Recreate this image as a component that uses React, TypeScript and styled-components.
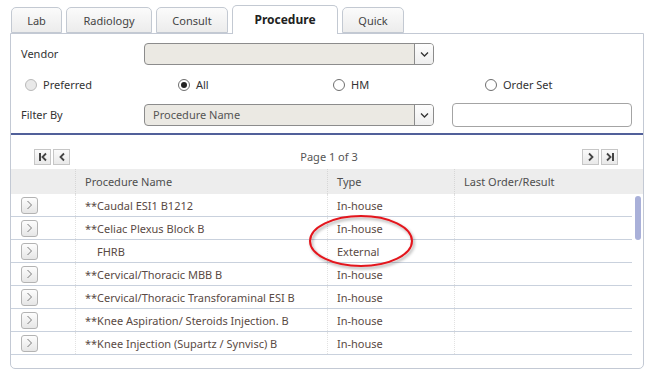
import React from "react";
import styled, { createGlobalStyle } from "styled-components";

const GlobalStyle = createGlobalStyle`
  html, body { margin: 0; padding: 0; background: #ffffff; }
  body { font-family: "Noto Sans", "Liberation Sans", sans-serif; font-size: 11px; color: #333; }
  * { box-sizing: border-box; }
`;

const Page = styled.div`
  position: relative;
  width: 650px;
  height: 377px;
  padding: 5px 6px 0 10px;
`;

const TabBar = styled.div`
  display: flex;
  align-items: flex-end;
  gap: 4px;
  padding-left: 1px;
  height: 28px;
  position: relative;
  z-index: 2;
`;

const Tab = styled.div<{ $active?: boolean; $w: number }>`
  width: ${(p) => p.$w}px;
  height: ${(p) => (p.$active ? "29px" : "26px")};
  margin-bottom: ${(p) => (p.$active ? "-1px" : "0")};
  display: flex;
  align-items: center;
  justify-content: center;
  border: 1px solid #c3c9d2;
  border-bottom: ${(p) => (p.$active ? "none" : "1px solid #c3c9d2")};
  border-radius: 5px 5px 0 0;
  background: ${(p) =>
    p.$active ? "#ffffff" : "linear-gradient(#fbfbfb, #ececec)"};
  color: ${(p) => (p.$active ? "#222" : "#444")};
  font-size: ${(p) => (p.$active ? "12px" : "11px")};
  font-weight: ${(p) => (p.$active ? 700 : 400)};
  padding-bottom: ${(p) => (p.$active ? "2px" : "0")};
`;

const Panel = styled.div`
  width: 634px;
  border: 1px solid #c3c9d4;
  border-radius: 0 0 5px 5px;
  background: #fff;
`;

const Form = styled.div`
  padding: 9px 11px 0 10px;
  display: flex;
  flex-direction: column;
`;

const FieldRow = styled.div<{ $mt?: number }>`
  display: grid;
  grid-template-columns: 123px 290px 1fr;
  align-items: center;
  height: 22px;
  margin-top: ${(p) => p.$mt ?? 0}px;
`;

const Label = styled.div`
  color: #333;
  font-size: 11px;
  line-height: 14px;
`;

const Select = styled.div`
  height: 22px;
  border: 1px solid #8c8c8c;
  border-radius: 4px;
  background: #ebe9e3;
  display: flex;
  align-items: center;
  overflow: hidden;
`;

const SelectText = styled.div`
  flex: 1;
  padding-left: 8px;
  color: #555;
  font-size: 11px;
  line-height: 14px;
`;

const SelectButton = styled.div`
  width: 19px;
  height: 100%;
  border-left: 1px solid #8c8c8c;
  background: linear-gradient(#fdfdfd, #eeeeee);
  display: flex;
  align-items: center;
  justify-content: center;
`;

const TextInput = styled.div`
  width: 180px;
  margin-left: 18px;
  height: 24px;
  border: 1px solid #a4a4a4;
  border-radius: 4px;
  background: #fff;
`;

const RadioRow = styled.div`
  display: grid;
  grid-template-columns: 153px 155px 152px 1fr;
  padding-left: 4px;
  height: 20px;
  margin-top: 10px;
  align-items: center;
`;

const RadioItem = styled.div`
  display: flex;
  align-items: center;
  gap: 6px;
`;

const RadioCircle = styled.span<{ $checked?: boolean; $disabled?: boolean }>`
  width: 12px;
  height: 12px;
  border-radius: 50%;
  border: 1px solid ${(p) => (p.$disabled ? "#b9b9b9" : "#6f6f6f")};
  background: ${(p) => (p.$disabled ? "#e9e9e9" : "#fff")};
  display: flex;
  align-items: center;
  justify-content: center;
  &::after {
    content: "";
    display: ${(p) => (p.$checked ? "block" : "none")};
    width: 6px;
    height: 6px;
    border-radius: 50%;
    background: #222;
  }
`;

const RadioLabel = styled.span`
  color: #333;
  font-size: 11px;
  line-height: 14px;
`;

const Divider = styled.div`
  height: 2px;
  background: #51609a;
  margin-top: 8px;
`;

const Pager = styled.div`
  display: flex;
  align-items: center;
  justify-content: space-between;
  padding: 13px 25px 0 23px;
  height: 30px;
`;

const PagerGroup = styled.div`
  display: flex;
  gap: 2px;
`;

const PagerButton = styled.div`
  width: 17px;
  height: 16px;
  border: 1px solid #c6c6c6;
  background: linear-gradient(#fafafa, #e9e9e9);
  display: flex;
  align-items: center;
  justify-content: center;
`;

const PageText = styled.div`
  color: #555;
  font-size: 11px;
  line-height: 14px;
  margin-left: 6px;
`;

const Grid = styled.div`
  margin-top: 4px;
`;

const HeaderRow = styled.div`
  display: grid;
  grid-template-columns: 64px 252px 127px 1fr;
  height: 25px;
  background: #ededed;
`;

const HeaderCell = styled.div<{ $divider?: boolean }>`
  display: flex;
  align-items: center;
  padding-left: 9px;
  color: #4f4f4f;
  font-size: 11px;
  border-left: ${(p) => (p.$divider ? "1px dotted #d6d6d6" : "none")};
`;

const Body = styled.div`
  display: flex;
  padding-bottom: 13px;
`;

const Rows = styled.div`
  width: 621px;
`;

const DataRow = styled.div`
  display: grid;
  grid-template-columns: 64px 252px 127px 1fr;
  height: 23px;
  border-bottom: 1px solid #c9d1dd;
`;

const Cell = styled.div<{ $divider?: boolean; $indent?: number }>`
  display: flex;
  align-items: center;
  padding-left: ${(p) => p.$indent ?? 9}px;
  color: #5a4a44;
  font-size: 11px;
  white-space: nowrap;
  border-left: ${(p) => (p.$divider ? "1px dotted #e2e2e2" : "none")};
`;

const ButtonCell = styled.div`
  display: flex;
  align-items: center;
  padding-left: 10px;
`;

const RowButton = styled.div`
  width: 17px;
  height: 17px;
  border: 1px solid #b3b3b3;
  border-radius: 3px;
  background: linear-gradient(#fdfdfd, #e6e6e6);
  display: flex;
  align-items: center;
  justify-content: center;
`;

const ScrollTrack = styled.div`
  width: 11px;
  display: flex;
  justify-content: center;
  padding-top: 2px;
`;

const ScrollThumb = styled.div`
  width: 6px;
  height: 44px;
  border-radius: 3px;
  background: #a9b0d9;
`;

const Annotation = styled.svg`
  position: absolute;
  left: 305px;
  top: 212px;
  pointer-events: none;
`;

const Chevron = () => (
  <svg width="9" height="7" viewBox="0 0 9 7">
    <path d="M1 1.5 L4.5 5 L8 1.5" fill="none" stroke="#333" strokeWidth="1.3" />
  </svg>
);

const RowArrow = () => (
  <svg width="7" height="10" viewBox="0 0 7 10">
    <path d="M1.5 1 L5.5 5 L1.5 9" fill="none" stroke="#7a7a7a" strokeWidth="1" />
  </svg>
);

const FirstIcon = () => (
  <svg width="10" height="10" viewBox="0 0 10 10">
    <path d="M2 1 V9" stroke="#444" strokeWidth="2" />
    <path d="M8 1.5 L4.5 5 L8 8.5" fill="none" stroke="#444" strokeWidth="1.8" />
  </svg>
);
const PrevIcon = () => (
  <svg width="10" height="10" viewBox="0 0 10 10">
    <path d="M7 1.5 L3.5 5 L7 8.5" fill="none" stroke="#444" strokeWidth="1.8" />
  </svg>
);
const NextIcon = () => (
  <svg width="10" height="10" viewBox="0 0 10 10">
    <path d="M3 1.5 L6.5 5 L3 8.5" fill="none" stroke="#444" strokeWidth="1.8" />
  </svg>
);
const LastIcon = () => (
  <svg width="10" height="10" viewBox="0 0 10 10">
    <path d="M2 1.5 L5.5 5 L2 8.5" fill="none" stroke="#444" strokeWidth="1.8" />
    <path d="M8 1 V9" stroke="#444" strokeWidth="2" />
  </svg>
);

const tabs = [
  { label: "Lab", w: 51 },
  { label: "Radiology", w: 86 },
  { label: "Consult", w: 72 },
  { label: "Procedure", w: 106, active: true },
  { label: "Quick", w: 62 },
];

const rows = [
  { name: "**Caudal ESI1 B1212", type: "In-house" },
  { name: "**Celiac Plexus Block B", type: "In-house" },
  { name: "FHRB", type: "External", indent: 21 },
  { name: "**Cervical/Thoracic MBB B", type: "In-house" },
  { name: "**Cervical/Thoracic Transforaminal ESI B", type: "In-house" },
  { name: "**Knee Aspiration/ Steroids Injection. B", type: "In-house" },
  { name: "**Knee Injection (Supartz / Synvisc) B", type: "In-house" },
];

export default function App() {
  return (
    <>
      <GlobalStyle />
      <Page>
        <TabBar>
          {tabs.map((t) => (
            <Tab key={t.label} $w={t.w} $active={t.active}>
              {t.label}
            </Tab>
          ))}
        </TabBar>
        <Panel>
          <Form>
            <FieldRow>
              <Label>Vendor</Label>
              <Select>
                <SelectText />
                <SelectButton>
                  <Chevron />
                </SelectButton>
              </Select>
            </FieldRow>
            <RadioRow>
              <RadioItem>
                <RadioCircle $disabled />
                <RadioLabel>Preferred</RadioLabel>
              </RadioItem>
              <RadioItem>
                <RadioCircle $checked />
                <RadioLabel>All</RadioLabel>
              </RadioItem>
              <RadioItem>
                <RadioCircle />
                <RadioLabel>HM</RadioLabel>
              </RadioItem>
              <RadioItem>
                <RadioCircle />
                <RadioLabel>Order Set</RadioLabel>
              </RadioItem>
            </RadioRow>
            <FieldRow $mt={8}>
              <Label>Filter By</Label>
              <Select>
                <SelectText>Procedure Name</SelectText>
                <SelectButton>
                  <Chevron />
                </SelectButton>
              </Select>
              <TextInput />
            </FieldRow>
          </Form>
          <Divider />
          <Pager>
            <PagerGroup>
              <PagerButton>
                <FirstIcon />
              </PagerButton>
              <PagerButton>
                <PrevIcon />
              </PagerButton>
            </PagerGroup>
            <PageText>Page 1 of 3</PageText>
            <PagerGroup>
              <PagerButton>
                <NextIcon />
              </PagerButton>
              <PagerButton>
                <LastIcon />
              </PagerButton>
            </PagerGroup>
          </Pager>
          <Grid>
            <HeaderRow>
              <HeaderCell />
              <HeaderCell $divider>Procedure Name</HeaderCell>
              <HeaderCell $divider>Type</HeaderCell>
              <HeaderCell $divider>Last Order/Result</HeaderCell>
            </HeaderRow>
            <Body>
              <Rows>
                {rows.map((r) => (
                  <DataRow key={r.name}>
                    <ButtonCell>
                      <RowButton>
                        <RowArrow />
                      </RowButton>
                    </ButtonCell>
                    <Cell $divider $indent={r.indent}>
                      {r.name}
                    </Cell>
                    <Cell $divider>{r.type}</Cell>
                    <Cell $divider />
                  </DataRow>
                ))}
              </Rows>
              <ScrollTrack>
                <ScrollThumb />
              </ScrollTrack>
            </Body>
          </Grid>
        </Panel>
        <Annotation width="116" height="62" viewBox="0 0 116 62">
          <defs>
            <filter id="sh" x="-20%" y="-20%" width="140%" height="140%">
              <feDropShadow dx="1.5" dy="2" stdDeviation="1.5" floodColor="#000" floodOpacity="0.35" />
            </filter>
          </defs>
          <ellipse cx="56" cy="29" rx="51" ry="25" fill="none" stroke="#e3161e" strokeWidth="2" filter="url(#sh)" />
        </Annotation>
      </Page>
    </>
  );
}
